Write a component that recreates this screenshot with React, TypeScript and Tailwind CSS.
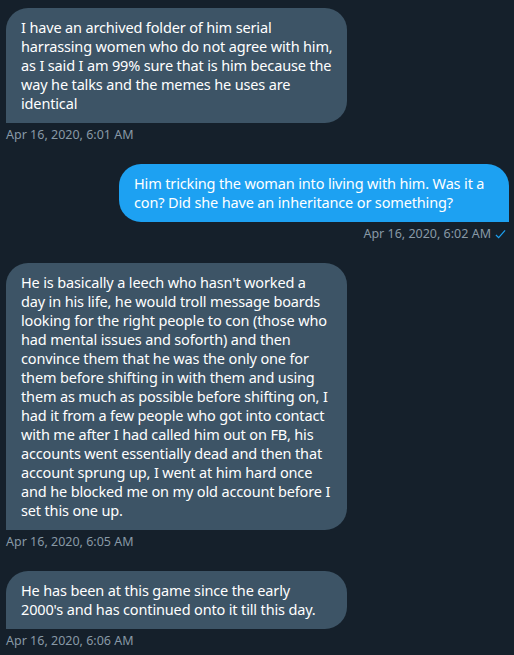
import React from 'react';

type Msg = {
  id: number;
  mine: boolean;
  lines: string[];
  time: string;
};

const messages: Msg[] = [
  {
    id: 1,
    mine: false,
    lines: [
      'I have an archived folder of him serial',
      'harrassing women who do not agree with him,',
      'as I said I am 99% sure that is him because the',
      'way he talks and the memes he uses are',
      'identical',
    ],
    time: 'Apr 16, 2020, 6:01 AM',
  },
  {
    id: 2,
    mine: true,
    lines: [
      'Him tricking the woman into living with him. Was it a',
      'con? Did she have an inheritance or something?',
    ],
    time: 'Apr 16, 2020, 6:02 AM',
  },
  {
    id: 3,
    mine: false,
    lines: [
      "He is basically a leech who hasn't worked a",
      'day in his life, he would troll message boards',
      'looking for the right people to con (those who',
      'had mental issues and soforth) and then',
      'convince them that he was the only one for',
      'them before shifting in with them and using',
      'them as much as possible before shifting on, I',
      'had it from a few people who got into contact',
      'with me after I had called him out on FB, his',
      'accounts went essentially dead and then that',
      'account sprung up, I went at him hard once',
      'and he blocked me on my old account before I',
      'set this one up.',
    ],
    time: 'Apr 16, 2020, 6:05 AM',
  },
  {
    id: 4,
    mine: false,
    lines: [
      'He has been at this game since the early',
      "2000's and has continued onto it till this day.",
    ],
    time: 'Apr 16, 2020, 6:06 AM',
  },
];

function Check() {
  return (
    <svg viewBox="0 0 12 12" className="w-[11px] h-[11px] text-[#1da1f2]" fill="none" stroke="currentColor" strokeWidth="1.3">
      <polyline points="1,6.5 4,9.5 11,1.5" />
    </svg>
  );
}

export default function App() {
  return (
    <div
      className="min-h-screen w-[514px] bg-[#15202b] pt-[8px] pl-[6px] pr-[5px]"
      style={{ fontFamily: '"Noto Sans", "Open Sans", sans-serif' }}
    >
      <div className="flex flex-col gap-[21px]">
        {messages.map((m) => (
          <div key={m.id} className={m.mine ? 'flex flex-col items-end' : 'flex flex-col items-start'}>
            <div
              className={
                m.mine
                  ? 'w-[390px] bg-[#1da1f2] text-white rounded-[22px] rounded-br-none px-[15px] py-[10px] text-[14.5px] tracking-[-0.15px] leading-[19px] whitespace-nowrap'
                  : 'w-[341px] bg-[#3d5466] text-white rounded-[22px] rounded-bl-none px-[15px] py-[10px] text-[14.5px] tracking-[-0.15px] leading-[19px] whitespace-nowrap'
              }
            >
              {m.lines.map((l, i) => (
                <div key={i}>{l}</div>
              ))}
            </div>
            <div className={m.mine ? 'flex items-center gap-[4px] mt-[4px] pr-[3px] text-[12.5px] leading-[16px] text-[#8899a6]' : 'mt-[4px] text-[12.5px] leading-[16px] text-[#8899a6]'}>
              <span>{m.time}</span>
              {m.mine && <Check />}
            </div>
          </div>
        ))}
      </div>
    </div>
  );
}
